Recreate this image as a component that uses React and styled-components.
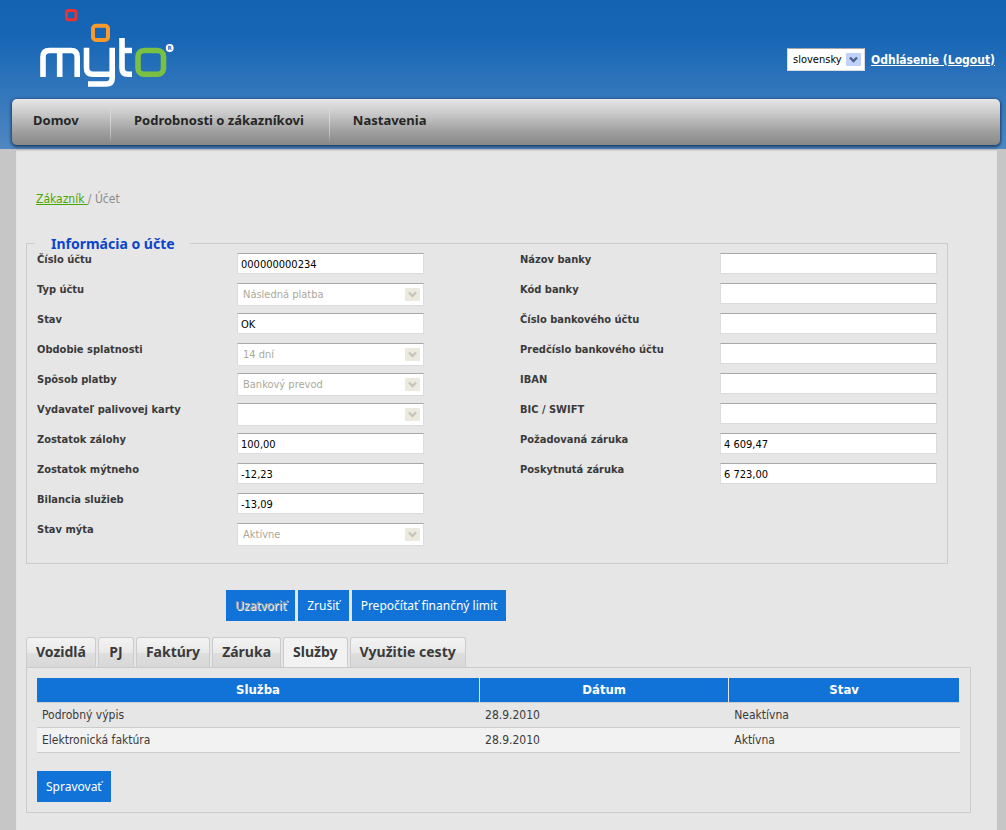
import React, { useState } from "react";
import styled, { createGlobalStyle, css } from "styled-components";

const navItems = ["Domov", "Podrobnosti o zákazníkovi", "Nastavenia"];

const accountFields = [
  { id: "cislo", label: "Číslo účtu", value: "000000000234" },
  { id: "typ", label: "Typ účtu", value: "Následná platba", select: true },
  { id: "stav", label: "Stav", value: "OK" },
  { id: "obdobie", label: "Obdobie splatnosti", value: "14 dní", select: true },
  { id: "sposob", label: "Spôsob platby", value: "Bankový prevod", select: true },
  { id: "vydavatel", label: "Vydavateľ palivovej karty", value: "", select: true },
  { id: "zaloha", label: "Zostatok zálohy", value: "100,00" },
  { id: "mytne", label: "Zostatok mýtneho", value: "-12,23" },
  { id: "bilancia", label: "Bilancia služieb", value: "-13,09" },
  { id: "stavmyta", label: "Stav mýta", value: "Aktívne", select: true },
];

const bankFields = [
  { id: "banka", label: "Názov banky", value: "" },
  { id: "kod", label: "Kód banky", value: "" },
  { id: "cislobanky", label: "Číslo bankového účtu", value: "" },
  { id: "predcislo", label: "Predčíslo bankového účtu", value: "" },
  { id: "iban", label: "IBAN", value: "" },
  { id: "bic", label: "BIC / SWIFT", value: "" },
  { id: "pozadovana", label: "Požadovaná záruka", value: "4 609,47" },
  { id: "poskytnuta", label: "Poskytnutá záruka", value: "6 723,00" },
];

const tabs = ["Vozidlá", "PJ", "Faktúry", "Záruka", "Služby", "Využitie cesty"];

const services = [
  { name: "Podrobný výpis", date: "28.9.2010", state: "Neaktívna" },
  { name: "Elektronická faktúra", date: "28.9.2010", state: "Aktívna" },
];

const Logo = () => (
  <LogoSvg viewBox="0 0 134 78" role="img" aria-label="myto">
    <g fill="none" strokeWidth="5.6">
      <rect x="26.5" y="1.5" width="9.5" height="9.3" rx="2" stroke="#ee3030" strokeWidth="3" />
      <rect x="53" y="16.7" width="15" height="14.3" rx="3" stroke="#f79a2d" strokeWidth="4" />
      <path stroke="#fff" d="M3 68V48Q3 41.5 9.5 41.5H31Q37.2 41.5 37.2 48V68M19.7 41.5V68" />
      <path stroke="#fff" d="M46.5 38.7V59Q46.5 65.2 53 65.2H72M72.2 38.7V69Q72.2 75 66 75H48" />
      <path stroke="#fff" d="M82 29V59Q82 65.2 88 65.2H92M82 41.5H92" />
      <rect x="98" y="41.5" width="25.5" height="23.7" rx="6" stroke="#7ac143" />
    </g>
    <circle cx="129.7" cy="39" r="3.9" fill="#fff" />
    <text x="129.7" y="41.2" fontSize="6" fontWeight="bold" textAnchor="middle" fill="#2a6db5">
      R
    </text>
  </LogoSvg>
);

const SelectBox = ({ id, options, disabled, label }) => (
  <SelectWrap>
    <Select id={id} disabled={disabled} aria-label={label}>
      {options.map((option) => (
        <option key={option}>{option}</option>
      ))}
    </Select>
    <Arrow $disabled={disabled} viewBox="0 0 15 13" aria-hidden="true">
      <rect width="15" height="13" rx="1" />
      <path d="M4 4.5L7.5 8L11 4.5" />
    </Arrow>
  </SelectWrap>
);

const Fields = ({ fields, $width }) => (
  <div>
    {fields.map(({ id, label, value, select }) => (
      <Row key={id} $width={$width}>
        <Label htmlFor={id}>{label}</Label>
        {select ? <SelectBox id={id} options={[value]} disabled /> : <Input id={id} defaultValue={value} />}
      </Row>
    ))}
  </div>
);

export default function App() {
  const [active, setActive] = useState("Služby");

  return (
    <>
      <GlobalStyle />
      <Header>
        <TopBar>
          <Logo />
          <Session>
            <SelectBox id="lang" label="Jazyk" options={["slovensky", "english"]} />
            <Logout href="#logout">Odhlásenie (Logout)</Logout>
          </Session>
        </TopBar>
        <Nav>
          {navItems.map((item) => (
            <NavLink key={item} href="#nav">
              {item}
            </NavLink>
          ))}
        </Nav>
      </Header>

      <Page>
        <Breadcrumb>
          <a href="#zakaznik">Zákazník </a>/ Účet
        </Breadcrumb>

        <Account>
          <Legend>Informácia o účte</Legend>
          <Columns>
            <Fields fields={accountFields} $width="187px" />
            <Fields fields={bankFields} $width="217px" />
          </Columns>
        </Account>

        <Actions>
          <Button disabled>Uzatvoriť</Button>
          <Button>Zrušiť</Button>
          <Button>Prepočítať finančný limit</Button>
        </Actions>

        <Tabs role="tablist">
          {tabs.map((tab) => (
            <Tab key={tab} role="tab" aria-selected={tab === active} $active={tab === active} onClick={() => setActive(tab)}>
              {tab}
            </Tab>
          ))}
        </Tabs>
        <Panel role="tabpanel">
          <Table>
            <thead>
              <tr>
                <th>Služba</th>
                <th>Dátum</th>
                <th>Stav</th>
              </tr>
            </thead>
            <tbody>
              {services.map(({ name, date, state }) => (
                <tr key={name}>
                  <td>{name}</td>
                  <td>{date}</td>
                  <td>{state}</td>
                </tr>
              ))}
            </tbody>
          </Table>
          <Button>Spravovať</Button>
        </Panel>
      </Page>
    </>
  );
}

//---------------------------STYLES-------------------------------------------//

const condensed = `"DejaVu Sans Condensed", "DejaVu Sans", sans-serif`;
const noto = `"Noto Sans", sans-serif`;

const GlobalStyle = createGlobalStyle`
  * {
    box-sizing: border-box;
  }
  body {
    margin: 0;
    background: #c6c6c6;
    color: #3a3a3a;
    font: 12px/16px ${condensed};
  }
  #root {
    display: flex;
    flex-direction: column;
    min-height: 100vh;
  }
`;

const Header = styled.header`
  padding: 0 6px 4px 12px;
  background: linear-gradient(#1463b3, #1766b6 25%, #4f87c1);
`;
const TopBar = styled.div`
  display: flex;
  justify-content: space-between;
  align-items: flex-start;
  height: 99px;
  padding: 9px 5px 0 28px;
`;
const LogoSvg = styled.svg`
  width: 134px;
  height: 78px;
  font-family: ${condensed};
`;
const Session = styled.div`
  display: flex;
  align-items: center;
  gap: 6px;
  margin-top: 39px;
`;
const Logout = styled.a`
  color: #fff;
  font-weight: bold;
`;
const Nav = styled.nav`
  display: flex;
  height: 46px;
  border-radius: 5px;
  background: linear-gradient(#e6e6e6, #cbcbcb 30%, #a0a0a0 70%, #888);
  box-shadow: 0 1px 3px 1px #1d3f66;
`;
const NavLink = styled.a`
  min-width: 98px;
  height: 42px;
  margin-top: 2px;
  padding: 10px 25px 0 21px;
  color: #262626;
  font: bold 13px/18px ${noto};
  text-decoration: none;
  & + & {
    padding-left: 23px;
    border-left: 1px solid;
    border-image: linear-gradient(transparent, #dcdcdc 40%, #c4c4c4 70%, transparent) 1;
  }
`;

const Page = styled.main`
  flex: 1;
  margin: 0 9px 0 16px;
  padding: 42px 26px 17px 10px;
  background: #e6e6e6;
  box-shadow: inset 0 2px 2px -1px #a8a8a8;
`;
const Breadcrumb = styled.div`
  padding-left: 10px;
  color: #8c8c8c;
  a {
    color: #46a800;
  }
`;
const Account = styled.fieldset`
  margin: 27px 23px 0 0;
  padding: 0 10px 10px;
  border: 1px solid #cbcbcb;
`;
const Legend = styled.legend`
  margin-left: -2px;
  padding: 1px 15px 0 16px;
  color: #0b45cc;
  font: bold 14px/18px ${noto};
`;
const Columns = styled.div`
  display: grid;
  grid-template-columns: 1fr 417px;
`;
const Row = styled.div`
  display: grid;
  grid-template-columns: 200px minmax(0, ${({ $width }) => $width});
  align-items: start;
  height: 30px;
`;
const Label = styled.label`
  font: bold 11px/14px ${condensed};
`;

const control = css`
  width: 100%;
  border: 1px solid #dcdce0;
  border-top-color: #a8a8a8;
  border-radius: 0;
  background: #fff;
  color: #000;
  font: 11px/16px ${condensed};
`;
const Input = styled.input`
  ${control}
  height: 21px;
  padding: 2px 3px 0;
`;
const Select = styled.select`
  ${control}
  height: 23px;
  padding: 1px 22px 0 5px;
  appearance: none;
  &:disabled {
    color: #aca899;
    opacity: 1;
  }
`;
const SelectWrap = styled.div`
  position: relative;
`;
const Arrow = styled.svg`
  position: absolute;
  top: 5px;
  right: 4px;
  width: 15px;
  height: 13px;
  pointer-events: none;
  rect {
    fill: ${({ $disabled }) => ($disabled ? "#eceadf" : "#bfd2fb")};
  }
  path {
    fill: none;
    stroke: ${({ $disabled }) => ($disabled ? "#c6c5bb" : "#4d6185")};
    stroke-width: 2.4;
  }
`;

const Actions = styled.div`
  display: flex;
  gap: 3px;
  padding: 26px 0 16px 200px;
`;
const Button = styled.button`
  height: 31px;
  padding: 0 9px;
  border: 0;
  background: #1173d8;
  color: #fff;
  font: 12px/16px ${noto};
  &:disabled {
    color: #aca899;
    text-shadow: 1px 1px #fff;
  }
`;

const Tabs = styled.div`
  display: flex;
  gap: 2px;
`;
const Tab = styled.button`
  min-width: 36px;
  height: 30px;
  padding: 0 9px 1px;
  border: 1px solid #cbcbcb;
  border-bottom: 0;
  border-radius: 3px 3px 0 0;
  background: ${({ $active }) => ($active ? "#f2f2f2" : "linear-gradient(#f3f3f3, #e9e9e9 52%, #dedede 53%, #d8d8d8)")};
  color: #3a3a3a;
  font: bold 14px/20px ${noto};
`;
const Panel = styled.div`
  padding: 10px;
  border: 1px solid #cbcbcb;
`;
const Table = styled.table`
  width: 100%;
  margin-bottom: 18px;
  border-spacing: 0;
  table-layout: fixed;
  th,
  td {
    height: 25px;
    padding: 0 5px;
    border-bottom: 1px solid #cbcbcb;
    text-align: left;
  }
  th {
    border-right: 1px solid #e6e6e6;
    background: #1173d8;
    color: #fff;
    font-size: 13px;
    text-align: center;
  }
  th:first-child {
    width: 48%;
  }
  th:last-child {
    width: 25%;
  }
  tbody tr:nth-child(even) {
    background: #f2f2f2;
  }
`;
